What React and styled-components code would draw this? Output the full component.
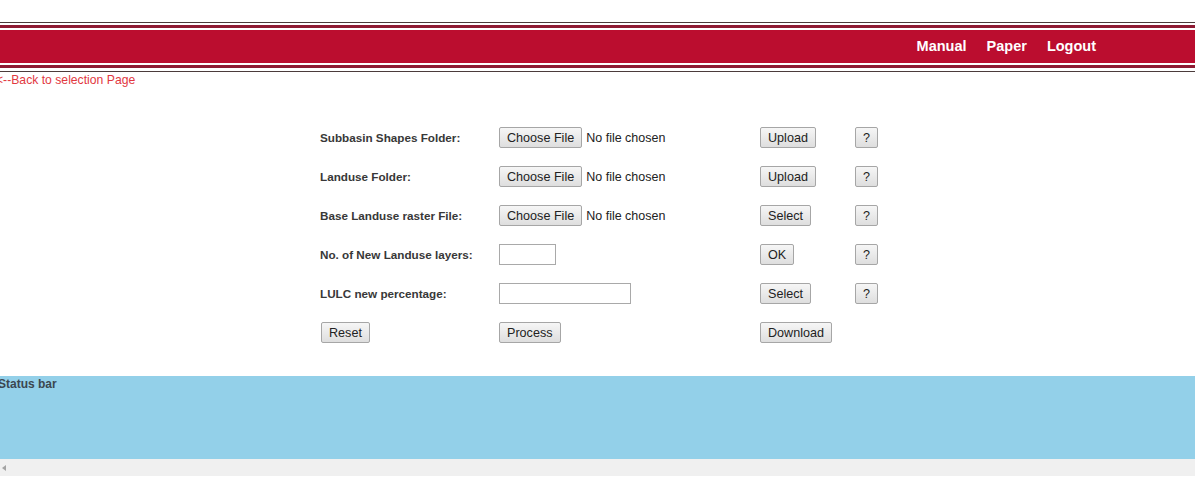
import React from "react";
import styled, { createGlobalStyle } from "styled-components";

const GlobalStyle = createGlobalStyle`
  html, body {
    margin: 0;
    padding: 0;
    background: #ffffff;
    font-family: "Liberation Sans", Arial, sans-serif;
    overflow: hidden;
  }
`;

const rows = [
  { label: "Subbasin Shapes Folder:", field: "file", action: "Upload", help: true },
  { label: "Landuse Folder:", field: "file", action: "Upload", help: true },
  { label: "Base Landuse raster File:", field: "file", action: "Select", help: true },
  { label: "No. of New Landuse layers:", field: "short", action: "OK", help: true },
  { label: "LULC new percentage:", field: "long", action: "Select", help: true },
];

const App = () => {
  return (
    <Page>
      <GlobalStyle />
      <Header>
        <Stripe $h={1} $color="#4b3b3b" />
        <Stripe $h={2} $color="#ffffff" />
        <Stripe $h={3} $color="#8e1a33" />
        <Stripe $h={2} $color="#ffffff" />
        <Band>
          <NavLink>Manual</NavLink>
          <NavLink>Paper</NavLink>
          <NavLink>Logout</NavLink>
        </Band>
        <Stripe $h={2} $color="#ffffff" />
        <Stripe $h={3} $color="#8e1a33" />
        <Stripe $h={3} $color="#ffffff" />
        <Stripe $h={1} $color="#4b3b3b" />
      </Header>

      <BackLink>&lt;--Back to selection Page</BackLink>

      <Form>
        {rows.map((row) => (
          <Row key={row.label}>
            <Label>{row.label}</Label>
            <Cell>
              {row.field === "file" && (
                <>
                  <Button>Choose File</Button>
                  <NoFile>No file chosen</NoFile>
                </>
              )}
              {row.field === "short" && <TextBox $w={57} />}
              {row.field === "long" && <TextBox $w={132} />}
            </Cell>
            <Cell>
              <Button>{row.action}</Button>
            </Cell>
            <Cell>{row.help && <Button $narrow>?</Button>}</Cell>
          </Row>
        ))}
        <Row>
          <Cell $indent>
            <Button>Reset</Button>
          </Cell>
          <Cell>
            <Button>Process</Button>
          </Cell>
          <Cell>
            <Button>Download</Button>
          </Cell>
          <Cell />
        </Row>
      </Form>

      <StatusBar>
        <StatusTitle>Status bar</StatusTitle>
      </StatusBar>
      <ScrollTrack>
        <ArrowLeft />
      </ScrollTrack>
    </Page>
  );
};

export default App;

const Page = styled.div`
  width: 1195px;
  height: 478px;
  padding-top: 22px;
  box-sizing: border-box;
  overflow: hidden;
`;

const Header = styled.div`
  display: flex;
  flex-direction: column;
`;

const Stripe = styled.div`
  height: ${(p) => p.$h}px;
  background: ${(p) => p.$color};
`;

const Band = styled.div`
  height: 33px;
  background: #bb0d2f;
  display: flex;
  justify-content: flex-end;
  align-items: center;
  gap: 20px;
  padding-right: 99px;
  padding-bottom: 1px;
  box-sizing: border-box;
`;

const NavLink = styled.a`
  color: #ffffff;
  font-weight: bold;
  font-size: 14.5px;
  cursor: pointer;
`;

const BackLink = styled.a`
  display: block;
  margin-left: -4px;
  margin-top: 1px;
  font-size: 12.2px;
  color: #e2383f;
  cursor: pointer;
  line-height: 14px;
`;

const Form = styled.div`
  margin-left: 320px;
  padding-top: 31px;
  display: grid;
  grid-template-columns: 179px 261px 95px 40px;
  grid-auto-rows: 39px;
  width: max-content;
`;

const Row = styled.div`
  display: contents;
`;

const Label = styled.div`
  display: flex;
  align-items: center;
  font-size: 11.7px;
  font-weight: bold;
  color: #383838;
`;

const Cell = styled.div`
  display: flex;
  align-items: center;
  padding-left: ${(p) => (p.$indent ? "1px" : "0")};
`;

const Button = styled.button`
  height: 21px;
  padding: 1px 7px 0;
  min-width: ${(p) => (p.$narrow ? "23px" : "0")};
  font-family: "Liberation Sans", Arial, sans-serif;
  font-size: 12.6px;
  color: #222222;
  background: linear-gradient(#f6f6f6, #dedede);
  border: 1px solid #a6a6a6;
  border-radius: 2px;
  box-sizing: border-box;
  line-height: 18px;
  cursor: pointer;
`;

const NoFile = styled.span`
  margin-left: 4px;
  font-size: 12.5px;
  color: #222222;
`;

const TextBox = styled.input`
  width: ${(p) => p.$w}px;
  height: 21px;
  box-sizing: border-box;
  border: 1px solid #a9a9a9;
  padding: 1px 2px;
  font-family: "Liberation Sans", Arial, sans-serif;
  font-size: 13px;
`;

const StatusBar = styled.div`
  margin-top: 24px;
  height: 83px;
  background: #93d0e9;
`;

const StatusTitle = styled.div`
  margin-left: -2px;
  padding-top: 1px;
  font-size: 12px;
  font-weight: bold;
  color: #3b4750;
`;

const ScrollTrack = styled.div`
  height: 17px;
  background: #f0f0f0;
  display: flex;
  align-items: center;
  padding-left: 2px;
`;

const ArrowLeft = styled.div`
  width: 0;
  height: 0;
  border-top: 3px solid transparent;
  border-bottom: 3px solid transparent;
  border-right: 4px solid #a3a3a3;
`;
